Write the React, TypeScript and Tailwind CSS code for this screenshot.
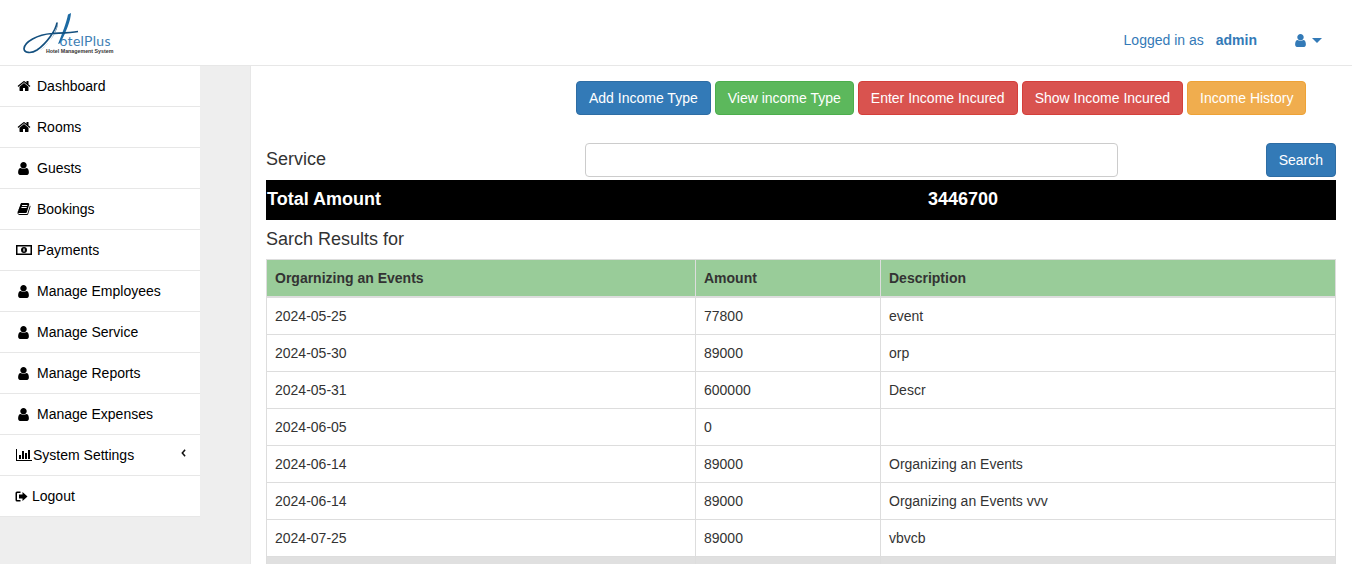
import type { ReactNode } from 'react'

const homePath =
  'M1472 992v480q0 26-19 45t-45 19h-384v-384h-256v384h-384q-26 0-45-19t-19-45v-480q0-1 .5-3t.5-3l575-474 575 474q1 2 1 6zm223-69l-62 74q-8 9-21 11h-3q-13 0-21-7l-692-577-692 577q-12 8-24 7-13-2-21-11l-62-74q-8-10-7-23.5t11-21.5l719-599q32-26 76-26t76 26l244 204v-195q0-14 9-23t23-9h192q14 0 23 9t9 23v408l219 182q10 8 11 21.5t-7 23.5z'
const userPath =
  'M1536 1399q0 109-62.500 187t-150.500 78h-854q-88 0-150.500-78t-62.500-187q0-85 8.500-160.500t31.500-152 58.500-131 94-89 134.500-34.500q131 128 313 128t313-128q76 0 134.500 34.500t94 89 58.500 131 31.500 152 8.500 160.500zm-256-887q0 159-112.500 271.500t-271.500 112.500-271.500-112.500-112.500-271.500 112.500-271.500 271.500-112.500 271.500 112.500 112.500 271.500z'
const bookPath =
  'M1703 478q40 57 18 129l-275 906q-19 64-76.500 107.500t-122.500 43.500h-923q-77 0-148.500-53.500t-99.500-131.500q-24-67-2-127 0-4 3-27t4-37q1-8-3-21.500t-3-19.500q2-11 8-21t16.500-23.500 16.500-23.500q23-38 45-91.500t30-91.500q3-10 .5-30t-.5-28q3-11 17-28t17-23q21-36 42-92t25-90q1-9-2.500-32t.5-28q4-13 22-30.500t22-22.500q19-26 42.500-84.500t27.500-96.500q1-8-3-25.500t-2-26.500q2-8 9-18t18-23 17-21q8-12 16.500-30.500t15-35 16-36 19.500-32 26.500-23.500 36-11.500 47.500 5.500l-1 3q38-9 51-9h761q74 0 114 56t18 130l-274 906q-36 119-71.500 153.500t-128.500 34.500h-869q-27 0-38 15-11 16-1 43 24 70 144 70h923q29 0 56-15.500t35-41.500l300-987q7-22 5-57 38 15 59 43zm-1064 2q-4 13 2 22.500t20 9.500h608q13 0 25.500-9.500t16.500-22.500l21-64q4-13-2-22.500t-20-9.500h-608q-13 0-25.500 9.500t-16.500 22.500zm-83 256q-4 13 2 22.500t20 9.500h608q13 0 25.500-9.500t16.500-22.500l21-64q4-13-2-22.500t-20-9.500h-608q-13 0-25.500 9.500t-16.500 22.500z'
const chartPath =
  'M640 896v512h-256v-512h256zm384-512v1024h-256v-1024h256zm1024 1152v128h-2048v-1536h128v1408h1920zm-640-896v768h-256v-768h256zm384-384v1152h-256v-1152h256z'

function Fa({ d, className = 'size-[14px]' }: { d: string; className?: string }) {
  return (
    <svg viewBox="0 0 1792 1792" className={className} fill="currentColor">
      <path d={d} />
    </svg>
  )
}

const HomeIcon = () => <Fa d={homePath} />
const UserIcon = () => <Fa d={userPath} className="size-[15px]" />
const BookIcon = () => <Fa d={bookPath} />

function MoneyIcon() {
  return (
    <svg viewBox="0 0 16 12" className="h-[12px] w-[16px]" fill="currentColor">
      <path
        fillRule="evenodd"
        d="M0 1h16v10H0zM1.500 2.500v7h13v-7zM8 3a3 3 0 1 1 0 6 3 3 0 0 1 0-6z"
      />
      <rect x="7.400" y="4.500" width="1.200" height="3" fill="#fff" />
    </svg>
  )
}

function ChartIcon() {
  return (
    <svg viewBox="0 0 2048 1792" className="h-[14px] w-[16px]" fill="currentColor">
      <path d={chartPath} />
    </svg>
  )
}

function LogoutIcon() {
  return (
    <svg viewBox="0 0 13 11" className="h-[11px] w-[13px]" fill="currentColor">
      <path d="M2 .5h3.500v1.500H2.600a.6.6 0 0 0-.6.600v5.800a.6.6 0 0 0 .6.600h2.900v1.500H2a1.500 1.500 0 0 1-1.500-1.500V2A1.500 1.500 0 0 1 2 .5z" />
      <path d="M7.500 1 12.500 5.500 7.500 10V7.500H4v-4h3.500z" />
    </svg>
  )
}

// drawn in page coordinates, the svg sits at 20,8
function Logo() {
  return (
    <svg viewBox="20 8 100 50" className="mt-[1px] h-[50px] w-[100px] shrink-0">
      <path
        d="M71 13C70.500 21 66.500 31 60.500 43L58 44C62.500 33 66.500 22 68 14.500Z"
        fill="#1c6aa3"
      />
      <path
        d="M57 22.500C56 30 47 43 37 50C31 54 24 53 24 48.500C24.500 42 37 34.500 52 33.500C61 33 70 33 78 31.500"
        stroke="#14507f"
        strokeWidth="1.700"
        fill="none"
      />
      <path d="M57.500 22C58 29 51 43 40 50.500C48 45 59.500 30 57.500 22Z" fill="#14507f" />
      <text x="59.500" y="46" fill="#3f7fb5" fontSize="14" fontFamily="Lato, sans-serif" letterSpacing="0.300">
        otelPlus
      </text>
      <text x="46" y="53" fill="#333" fontSize="5.300" fontWeight="700" fontFamily="'Liberation Sans', sans-serif">
        Hotel Management System
      </text>
    </svg>
  )
}

type NavItem = { label: string; icon: ReactNode; pad: string; chevron?: boolean }

const nav: NavItem[] = [
  { label: 'Dashboard', icon: <HomeIcon />, pad: 'pl-[17px] gap-[6px]' },
  { label: 'Rooms', icon: <HomeIcon />, pad: 'pl-[17px] gap-[6px]' },
  { label: 'Guests', icon: <UserIcon />, pad: 'pl-[16px] gap-[6px]' },
  { label: 'Bookings', icon: <BookIcon />, pad: 'pl-[17px] gap-[6px]' },
  { label: 'Payments', icon: <MoneyIcon />, pad: 'pl-[16px] gap-[5px]' },
  { label: 'Manage Employees', icon: <UserIcon />, pad: 'pl-[16px] gap-[6px]' },
  { label: 'Manage Service', icon: <UserIcon />, pad: 'pl-[16px] gap-[6px]' },
  { label: 'Manage Reports', icon: <UserIcon />, pad: 'pl-[16px] gap-[6px]' },
  { label: 'Manage Expenses', icon: <UserIcon />, pad: 'pl-[16px] gap-[6px]' },
  { label: 'System Settings', icon: <ChartIcon />, pad: 'pl-[16px] gap-[1px]', chevron: true },
  { label: 'Logout', icon: <LogoutIcon />, pad: 'pl-[15px] gap-[4px]' },
]

const actions = [
  { label: 'Add Income Type', cls: 'bg-[#337ab7] border-[#2e6da4]' },
  { label: 'View income Type', cls: 'bg-[#5cb85c] border-[#4cae4c]' },
  { label: 'Enter Income Incured', cls: 'bg-[#d9534f] border-[#d43f3a]' },
  { label: 'Show Income Incured', cls: 'bg-[#d9534f] border-[#d43f3a]' },
  { label: 'Income History', cls: 'bg-[#f0ad4e] border-[#eea236]' },
]

const rows = [
  ['2024-05-25', '77800', 'event'],
  ['2024-05-30', '89000', 'orp'],
  ['2024-05-31', '600000', 'Descr'],
  ['2024-06-05', '0', ''],
  ['2024-06-14', '89000', 'Organizing an Events'],
  ['2024-06-14', '89000', 'Organizing an Events vvv'],
  ['2024-07-25', '89000', 'vbvcb'],
]

export default function App() {
  return (
    <div className="flex h-screen flex-col overflow-hidden bg-white font-['Liberation_Sans',Arial,sans-serif] text-[14px] leading-[20px] text-[#333]">
      <header className="flex h-[66px] shrink-0 items-center border-b border-[#e7e7e7] pr-[30px] pl-[20px] text-[#337ab7]">
        <Logo />
        <div className="mt-[15px] ml-auto flex items-center">
          <span>Logged in as</span>
          <b className="ml-[12px]">admin</b>
          <span className="ml-[36px] flex items-center gap-[4px]">
            <UserIcon />
            <span className="mt-[1px] border-x-[5px] border-t-[5px] border-x-transparent border-t-[#337ab7]" />
          </span>
        </div>
      </header>

      <div className="flex min-h-0 flex-1 bg-[#eee]">
        <aside className="w-[251px] shrink-0 border-r border-[#e7e7e7] pr-[50px]">
          <ul className="bg-white text-black">
            {nav.map((item) => (
              <li
                key={item.label}
                className={`flex h-[41px] items-center border-b border-[#e7e7e7] ${item.pad}`}
              >
                <span className="flex shrink-0 justify-center">{item.icon}</span>
                {item.label}
                {item.chevron && (
                  <svg viewBox="0 0 6 10" className="mb-[4px] ml-auto mr-[14px] h-[8px] w-[5px]" fill="none" stroke="#111" strokeWidth="1.900">
                    <path d="M5 1 1.500 5 5 9" />
                  </svg>
                )}
              </li>
            ))}
          </ul>
        </aside>

        <main className="min-w-0 flex-1 bg-white pt-[15px] pr-[16px] pl-[15px]">
          <div className="flex gap-[4px] pl-[310px]">
            {actions.map((a) => (
              <button
                key={a.label}
                className={`h-[34px] rounded border px-[12px] text-white ${a.cls}`}
              >
                {a.label}
              </button>
            ))}
          </div>

          <div className="mt-[28px] flex items-center">
            <span className="w-[319px] pb-[2px] text-[18px] leading-[20px]">Service</span>
            <input className="h-[34px] w-[533px] rounded border border-[#ccc] bg-white" />
            <button className="ml-auto h-[34px] rounded border border-[#2e6da4] bg-[#337ab7] px-[12px] text-white">
              Search
            </button>
          </div>

          <div className="mt-[3px] flex h-[40px] items-center bg-black pb-[2px] pl-[1px] text-[18px] font-bold text-white">
            <span className="w-[661px]">Total Amount</span>
            <span>3446700</span>
          </div>

          <h4 className="mt-[9px] mb-[10px] text-[18px] leading-[20px]">Sarch Results for</h4>

          <table className="w-full table-fixed border-collapse">
            <colgroup>
              <col className="w-[429px]" />
              <col className="w-[185px]" />
              <col />
            </colgroup>
            <thead>
              <tr className="bg-[#9c9]">
                <th className="border border-[#ddd] border-b-2 p-[8px] text-left font-bold">Orgarnizing an Events</th>
                <th className="border border-[#ddd] border-b-2 p-[8px] text-left font-bold">Amount</th>
                <th className="border border-[#ddd] border-b-2 p-[8px] text-left font-bold">Description</th>
              </tr>
            </thead>
            <tbody>
              {rows.map((row, i) => (
                <tr key={i}>
                  {row.map((cell, j) => (
                    <td key={j} className="h-[37px] border border-[#ddd] p-[8px]">
                      {cell}
                    </td>
                  ))}
                </tr>
              ))}
              <tr className="bg-[#e0e0e0]">
                <td className="h-[37px] border border-[#ddd]" />
                <td className="h-[37px] border border-[#ddd]" />
                <td className="h-[37px] border border-[#ddd]" />
              </tr>
            </tbody>
          </table>
        </main>
      </div>
    </div>
  )
}
